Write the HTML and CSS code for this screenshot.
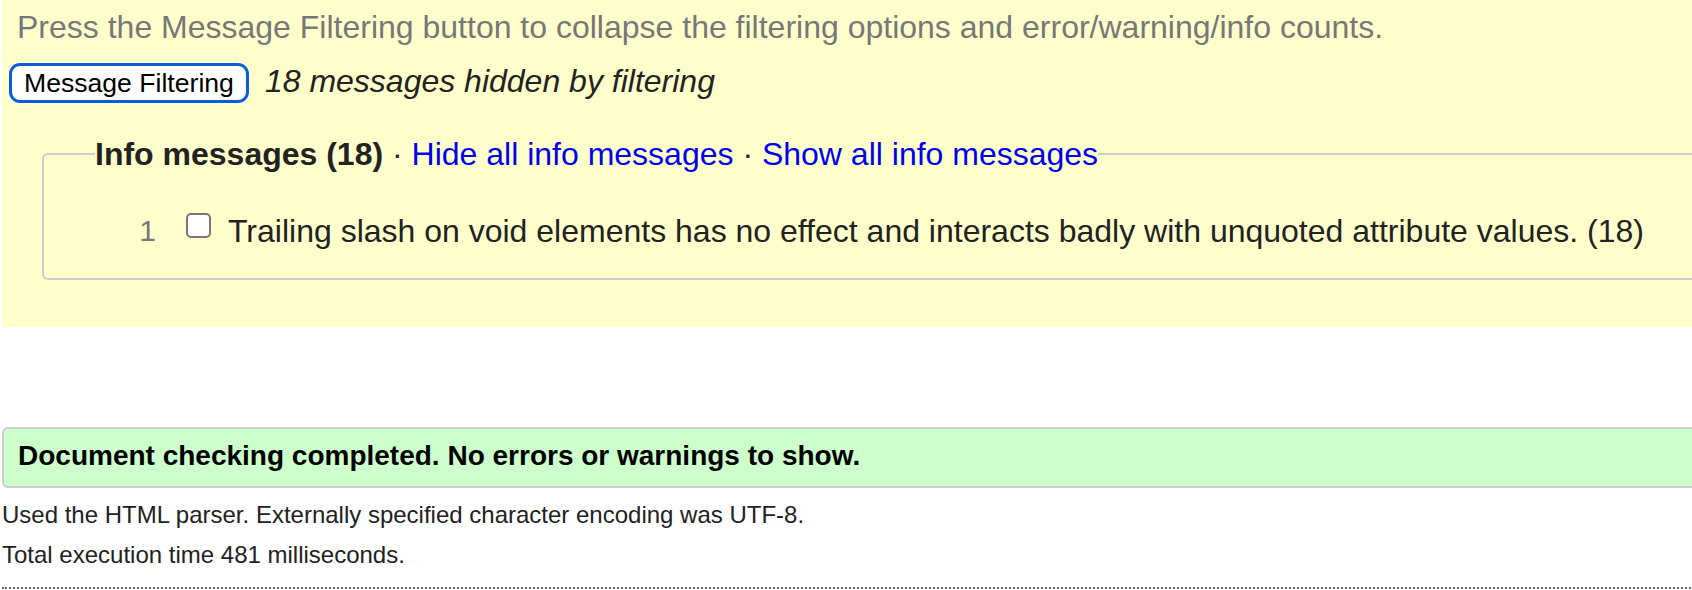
FILE: index.html
```html
<!DOCTYPE html>
<html lang="en">
<head>
<meta charset="utf-8">
<title>Nu Html Checker</title>
<link rel="stylesheet" href="styles.css">
</head>
<body>
<div class="page">
  <section class="filters">
    <p class="hint">Press the Message Filtering button to collapse the filtering options and error/warning/info counts.</p>
    <div class="toggle-row">
      <button class="filter-btn" type="button">Message Filtering</button>
      <span class="hidden-count">18 messages hidden by filtering</span>
    </div>
    <fieldset class="group">
      <legend class="group-legend"><strong>Info messages (18)</strong> · <a href="#">Hide all info messages</a> · <a href="#">Show all info messages</a></legend>
      <div class="item">
        <span class="num">1</span>
        <input class="check" type="checkbox">
        <span class="msg">Trailing slash on void elements has no effect and interacts badly with unquoted attribute values. (18)</span>
      </div>
    </fieldset>
  </section>
  <div class="success">Document checking completed. No errors or warnings to show.</div>
  <p class="details">Used the HTML parser. Externally specified character encoding was UTF-8.</p>
  <p class="details">Total execution time 481 milliseconds.</p>
  <hr class="dotted">
</div>
</body>
</html>
```

FILE: styles.css
```css
html, body {
  margin: 0;
  padding: 0;
  overflow: hidden;
  background: #fff;
}
body {
  font-family: "Liberation Sans", Arial, sans-serif;
  color: #222;
}
.page {
  margin-left: 2px;
  width: 1900px;
}
.filters {
  background: #ffffcc;
  padding: 9px 0 47px 0;
}
.hint {
  margin: 0 0 0 15px;
  font-size: 32px;
  line-height: 36px;
  color: #777;
}
.toggle-row {
  display: flex;
  align-items: baseline;
  margin-top: 18px;
  margin-left: 7px;
  gap: 16px;
}
.filter-btn {
  font-family: "Liberation Sans", Arial, sans-serif;
  font-size: 26.6px;
  line-height: 34px;
  color: #000;
  background: #fff;
  border: 3px solid #0a5fd0;
  border-radius: 11px;
  height: 40px;
  padding: 0 12px;
  box-shadow: 0 0 0 1px #fff;
}
.hidden-count {
  font-size: 32px;
  line-height: 36px;
  font-style: italic;
  color: #222;
}
.group {
  margin: 33px 0 0 40px;
  border: 2px solid #ccc;
  border-radius: 6px;
  padding: 0;
  min-width: 0;
}
.group-legend {
  font-size: 32px;
  line-height: 36px;
  margin-left: 51px;
  padding: 0;
}
.group-legend a {
  color: #0000ee;
  text-decoration: none;
}
.item {
  display: flex;
  align-items: flex-start;
  padding: 41px 0 29px 0;
  font-size: 32px;
  line-height: 36px;
}
.num {
  width: 112px;
  text-align: right;
  color: #777;
  font-size: 30px;
}
.check {
  appearance: none;
  -webkit-appearance: none;
  flex: none;
  width: 25px;
  height: 25px;
  border: 2px solid #777;
  border-radius: 5px;
  background: #fff;
  margin: 0 17px 0 30px;
}
.success {
  margin-top: 100px;
  background: #ccffcc;
  border: 2px solid #ccc;
  border-radius: 6px;
  padding: 11px 14px 14px;
  font-size: 28px;
  line-height: 32px;
  font-weight: bold;
  color: #000;
}
.details {
  margin: 13px 0 0 0;
  font-size: 24px;
  line-height: 28px;
}
.details + .details {
  margin-top: 12px;
}
.dotted {
  margin: 18px 0 0 0;
  border: 0;
  border-top: 2px dotted #666;
}
```
